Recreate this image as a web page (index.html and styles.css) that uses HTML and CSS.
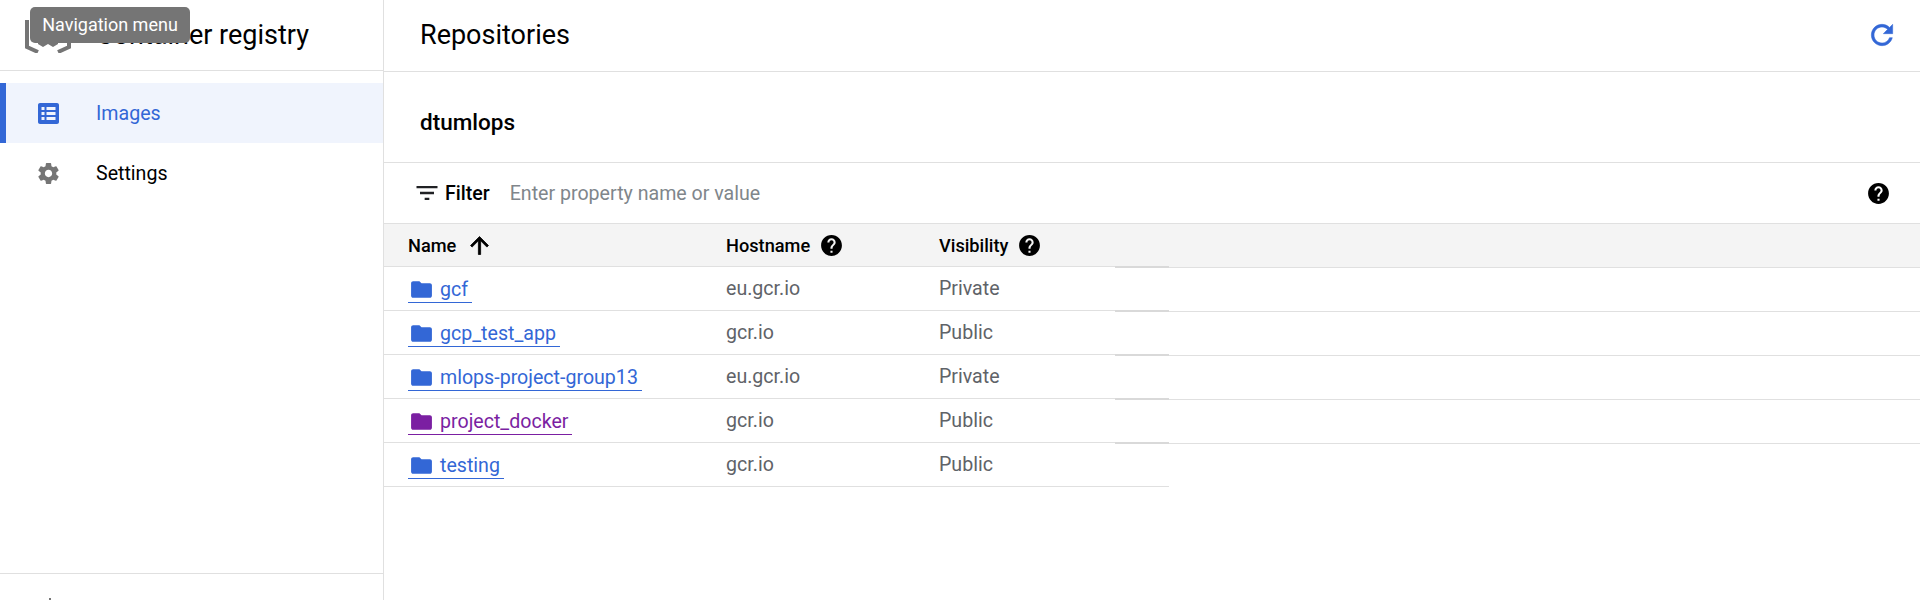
FILE: index.html
```html
<!DOCTYPE html>
<html lang="en">
<head>
    <meta charset="UTF-8">
    <meta name="viewport" content="width=device-width, initial-scale=1.0">
    <title>Container registry - Repositories</title>
    <link rel="stylesheet" href="styles.css">
</head>
<body>

<svg class="icon-defs" aria-hidden="true">
    <symbol id="icon-help" viewBox="0 0 24 24"><path d="M12 2C6.48 2 2 6.48 2 12s4.48 10 10 10 10-4.48 10-10S17.52 2 12 2zm1 17h-2v-2h2v2zm2.07-7.75l-.9.92C13.45 12.9 13 13.5 13 15h-2v-.5c0-1.1.45-2.1 1.17-2.83l1.24-1.26c.37-.36.59-.86.59-1.41 0-1.1-.9-2-2-2s-2 .9-2 2H8c0-2.21 1.79-4 4-4s4 1.79 4 4c0 .88-.36 1.68-.93 2.25z"/></symbol>
    <symbol id="icon-folder" viewBox="0 0 24 24"><path d="M10 4H4c-1.1 0-1.99.9-1.99 2L2 18c0 1.1.9 2 2 2h16c1.1 0 2-.9 2-2V8c0-1.1-.9-2-2-2h-8l-2-2z"/></symbol>
</svg>

<div class="page">
    <!-- Sidebar -->
    <aside class="sidebar">
        <div class="brand">
            <svg class="brand-logo" viewBox="0 0 46 36">
                <path d="M2 3v27l11 5M44 3v27l-11 5" fill="none" stroke="#757575" stroke-width="4"/>
                <path d="M13 27l5 3 5-3 5 3 5-3v-5H13z" fill="#757575"/>
            </svg>
            <span class="brand-name">Container registry</span>
        </div>
        <div class="tooltip">Navigation menu</div>

        <nav class="nav">
            <a class="nav-item active" href="#">
                <svg class="nav-icon" viewBox="0 0 25 25">
                    <path fill-rule="evenodd" d="M4 2h17c1.1 0 2 .9 2 2v17c0 1.1-.9 2-2 2H4c-1.100 0-2-.9-2-2V4c0-1.100.9-2 2-2zm1.500 4v3h3V6zm5 0v3h9V6zm-5 5v3h3v-3zm5 0v3h9v-3zm-5 5v3h3v-3zm5 0v3h9v-3z"/>
                </svg>
                <span>Images</span>
            </a>
            <a class="nav-item" href="#">
                <svg class="nav-icon" viewBox="0 0 24 24">
                    <path d="M19.430 12.980c.04-.32.07-.64.07-.98s-.03-.66-.07-.98l2.110-1.650c.19-.15.24-.42.12-.64l-2-3.460c-.12-.22-.39-.3-.61-.22l-2.490 1c-.52-.4-1.080-.73-1.690-.98l-.38-2.650C14.460 2.180 14.250 2 14 2h-4c-.25 0-.46.18-.49.42l-.38 2.650c-.61.25-1.170.59-1.690.98l-2.490-1c-.23-.09-.49 0-.61.22l-2 3.460c-.13.22-.07.49.12.64l2.110 1.650c-.04.32-.07.65-.07.98s.03.66.07.98l-2.110 1.650c-.19.15-.24.42-.12.64l2 3.460c.12.22.39.3.61.22l2.490-1c.52.4 1.080.73 1.690.98l.38 2.650c.03.24.24.42.49.42h4c.25 0 .46-.18.49-.42l.38-2.650c.61-.25 1.170-.59 1.690-.98l2.490 1c.23.09.49 0 .61-.22l2-3.460c.12-.22.07-.49-.12-.64l-2.110-1.650zM12 15.500c-1.930 0-3.500-1.570-3.500-3.500s1.570-3.500 3.500-3.500 3.500 1.570 3.500 3.500-1.570 3.500-3.500 3.500z"/>
                </svg>
                <span>Settings</span>
            </a>
        </nav>

        <div class="sidebar-foot"><span class="collapse-tick"></span></div>
    </aside>

    <!-- Main content -->
    <main class="main">
        <header class="main-header">
            <h1>Repositories</h1>
            <svg class="refresh" viewBox="0 0 24 24">
                <path d="M17.650 6.350C16.200 4.900 14.210 4 12 4c-4.420 0-7.990 3.580-7.990 8s3.570 8 7.990 8c3.730 0 6.840-2.550 7.730-6h-2.080c-.82 2.330-3.040 4-5.650 4-3.310 0-6-2.690-6-6s2.690-6 6-6c1.660 0 3.140.69 4.220 1.780L13 11h7V4l-2.350 2.350z"/>
            </svg>
        </header>

        <section class="project">
            <h2>dtumlops</h2>
        </section>

        <div class="filter-bar">
            <svg class="filter-icon" viewBox="0 0 24 24"><path d="M10 18h4v-2h-4v2zM3 6v2h18V6H3zm3 7h12v-2H6v2z"/></svg>
            <span class="filter-label">Filter</span>
            <input class="filter-input" type="text" placeholder="Enter property name or value">
            <svg class="help help-end"><use href="#icon-help"/></svg>
        </div>

        <div class="table">
            <div class="row head">
                <div class="cell">Name
                    <svg class="sort-arrow" viewBox="0 0 24 24"><path d="M4 12l1.410 1.410L11 7.830V20h2V7.830l5.580 5.590L20 12l-8-8-8 8z"/></svg>
                </div>
                <div class="cell">Hostname <svg class="help"><use href="#icon-help"/></svg></div>
                <div class="cell">Visibility <svg class="help"><use href="#icon-help"/></svg></div>
                <div class="tail"></div>
                <div class="rest"></div>
            </div>
            <div class="row">
                <div class="cell"><a class="repo" href="#"><svg class="folder"><use href="#icon-folder"/></svg>gcf</a></div>
                <div class="cell">eu.gcr.io</div>
                <div class="cell">Private</div>
                <div class="tail"></div>
                <div class="rest"></div>
            </div>
            <div class="row">
                <div class="cell"><a class="repo" href="#"><svg class="folder"><use href="#icon-folder"/></svg>gcp_test_app</a></div>
                <div class="cell">gcr.io</div>
                <div class="cell">Public</div>
                <div class="tail"></div>
                <div class="rest"></div>
            </div>
            <div class="row">
                <div class="cell"><a class="repo" href="#"><svg class="folder"><use href="#icon-folder"/></svg>mlops-project-group13</a></div>
                <div class="cell">eu.gcr.io</div>
                <div class="cell">Private</div>
                <div class="tail"></div>
                <div class="rest"></div>
            </div>
            <div class="row">
                <div class="cell"><a class="repo visited" href="#"><svg class="folder"><use href="#icon-folder"/></svg>project_docker</a></div>
                <div class="cell">gcr.io</div>
                <div class="cell">Public</div>
                <div class="tail"></div>
                <div class="rest"></div>
            </div>
            <div class="row last">
                <div class="cell"><a class="repo" href="#"><svg class="folder"><use href="#icon-folder"/></svg>testing</a></div>
                <div class="cell">gcr.io</div>
                <div class="cell">Public</div>
                <div class="tail"></div>
                <div class="rest"></div>
            </div>
        </div>
    </main>
</div>

</body>
</html>
```

FILE: styles.css
```css
* {
    box-sizing: border-box;
}
body {
    margin: 0;
    font-family: 'Roboto', sans-serif;
    font-size: 19.6px;
    color: #000;
    background: #fff;
}
a {
    text-decoration: none;
}
.icon-defs {
    display: none;
}
.page {
    display: flex;
    height: 600px;
    overflow: hidden;
}

/* sidebar */
.sidebar {
    position: relative;
    display: flex;
    flex-direction: column;
    flex: 0 0 384px;
    border-right: 1px solid #e0e0e0;
}
.brand {
    display: flex;
    align-items: center;
    height: 71px;
    padding-left: 25px;
    border-bottom: 1px solid #e0e0e0;
}
.brand-logo {
    width: 46px;
    height: 36px;
    flex: none;
}
.brand-name {
    margin-left: 25px;
    font-size: 27px;
}
.tooltip {
    position: absolute;
    top: 7px;
    left: 30px;
    width: 160px;
    height: 36px;
    line-height: 35px;
    text-align: center;
    font-size: 18px;
    color: #fff;
    background: #757575;
    border-radius: 5px;
}
.nav {
    flex: 1;
    padding-top: 12px;
}
.nav-item {
    display: flex;
    align-items: center;
    height: 60px;
    padding-left: 36px;
    color: #000;
}
.nav-item span {
    margin-left: 35px;
}
.nav-icon {
    width: 25px;
    height: 25px;
    fill: #757575;
}
.nav-item.active {
    padding-left: 30px;
    color: #3367d6;
    background: #f0f4fd;
    border-left: 6px solid #3367d6;
}
.nav-item.active .nav-icon {
    fill: #3367d6;
}
.sidebar-foot {
    flex: 0 0 27px;
    padding: 24px 0 0 49px;
    border-top: 1px solid #e0e0e0;
}
.collapse-tick {
    display: block;
    width: 2px;
    height: 2px;
    background: #757575;
}

/* main */
.main {
    flex: 1;
    min-width: 0;
}
.main-header {
    display: flex;
    align-items: center;
    justify-content: space-between;
    height: 72px;
    padding: 0 22px 2px 36px;
    border-bottom: 1px solid #e0e0e0;
}
h1 {
    margin: 0;
    font-size: 27px;
    font-weight: 400;
}
.refresh {
    width: 32px;
    height: 32px;
    fill: #3367d6;
    stroke: #3367d6;
    stroke-width: 0.4;
}
.project {
    display: flex;
    align-items: center;
    height: 91px;
    padding: 10px 0 0 36px;
    border-bottom: 1px solid #e0e0e0;
}
h2 {
    margin: 0;
    font-size: 22.5px;
    font-weight: 500;
}
.filter-bar {
    display: flex;
    align-items: center;
    height: 61px;
    padding: 0 29px 0 29px;
    border-bottom: 1px solid #e0e0e0;
}
.filter-icon {
    width: 28px;
    height: 28px;
    flex: none;
    fill: #202124;
}
.filter-label {
    margin-left: 4px;
    font-weight: 500;
}
.filter-input {
    flex: 1;
    margin-left: 20px;
    padding: 0;
    border: none;
    outline: none;
    font-family: inherit;
    font-size: 19.6px;
    background: transparent;
}
.filter-input::placeholder {
    color: #80868b;
    opacity: 1;
}
.help {
    width: 25px;
    height: 25px;
    flex: none;
    fill: #000;
}
.help-end {
    margin-left: auto;
}

/* table */
.row {
    display: grid;
    grid-template-columns: 342px 213px 176px 54px 1fr;
    height: 44px;
}
.row.head {
    height: 43px;
    background: #f4f4f4;
    font-weight: 500;
    font-size: 18.2px;
    color: #000;
}
.cell {
    display: flex;
    align-items: center;
    gap: 9px;
    border-bottom: 1px solid #e0e0e0;
    color: #5f6368;
}
.head .cell {
    color: #000;
}
.cell:first-child {
    padding-left: 24px;
}
.tail, .rest {
    height: calc(100% + 1px);
    margin-bottom: -1px;
    border-bottom: 1px solid #e0e0e0;
}
.tail {
    border-bottom: 2px solid #d9d9d9;
}
.last .tail {
    height: 100%;
    margin-bottom: 0;
    border-bottom: 1px solid #e0e0e0;
}
.last .rest {
    border-bottom: none;
}
.sort-arrow {
    width: 27px;
    height: 27px;
    margin-left: 1px;
    fill: #000;
    stroke: #000;
    stroke-width: 0.7;
}
.repo {
    display: flex;
    align-items: center;
    align-self: flex-start;
    height: 36px;
    padding: 9px 4px 0 1px;
    color: #3367d6;
    border-bottom: 1px solid #3367d6;
}
.repo.visited {
    color: #7b1fa2;
    border-bottom-color: #7b1fa2;
}
.folder {
    width: 25px;
    height: 25px;
    margin-right: 6px;
    fill: currentColor;
}
```
